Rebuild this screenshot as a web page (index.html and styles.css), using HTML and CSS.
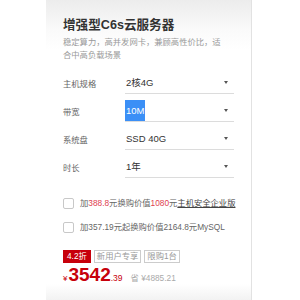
FILE: index.html
```html
<!DOCTYPE html>
<html lang="zh-CN">

<head>
    <meta charset="UTF-8">
    <meta name="viewport" content="width=device-width, initial-scale=1.0">
    <title>增强型C6s云服务器</title>
    <link rel="stylesheet" href="styles.css">
</head>

<body>
    <!-- Product card -->
    <div class="card">
        <h1 class="title">增强型C6s云服务器</h1>
        <p class="desc">稳定算力，高并发网卡，兼顾高性价比，适合中高负载场景</p>

        <div class="form">
            <div class="row">
                <span class="label">主机规格</span>
                <div class="select"><span class="value">2核4G</span><i class="arrow"></i></div>
            </div>
            <div class="row">
                <span class="label">带宽</span>
                <div class="select"><span class="value selected">10M</span><i class="arrow"></i></div>
            </div>
            <div class="row">
                <span class="label">系统盘</span>
                <div class="select"><span class="value">SSD 40G</span><i class="arrow"></i></div>
            </div>
            <div class="row">
                <span class="label">时长</span>
                <div class="select"><span class="value">1年</span><i class="arrow"></i></div>
            </div>
        </div>

        <div class="options">
            <label class="opt">
                <span class="box"></span>
                <span>加<em>388.8</em>元换购价值<em>1080</em>元<u>主机安全企业版</u></span>
            </label>
            <label class="opt">
                <span class="box"></span>
                <span>加357.19元起换购价值2164.8元MySQL</span>
            </label>
        </div>

        <div class="tags">
            <span class="tag tag-red">4.2折</span>
            <span class="tag">新用户专享</span>
            <span class="tag">限购1台</span>
        </div>

        <div class="price">
            <span class="yen">¥</span><span class="int">3542</span><span class="dec">.39</span>
            <span class="old">省 ¥4885.21</span>
        </div>
    </div>
</body>

</html>
```

FILE: styles.css
```css
body {
    margin: 0px;
    padding: 0px;
    font-family: "Liberation Sans", "Noto Sans CJK SC", sans-serif;
    background: #fff;
    height: 300px;
    overflow: hidden;
}

.card {
    margin-left: 46px;
    width: 206px;
    height: 300px;
    padding: 17px 0 0 17px;
    box-sizing: border-box;
    border-right: 1px solid #e2e2e2;
    background: linear-gradient(to bottom, #ececec 0px, #fafafa 30px, #fff 50px, #fff 284px, #f2f2f2 300px);
}

.title {
    margin: 0;
    font-size: 12.6px;
    line-height: 16px;
    font-weight: bold;
    color: #333;
}

.desc {
    margin: 3px 0 0 0;
    width: 162px;
    font-size: 8.3px;
    line-height: 13px;
    color: #999;
}

.form {
    margin-top: 10px;
    display: flex;
    flex-direction: column;
    gap: 6px;
}

.row {
    display: flex;
    align-items: center;
}

.label {
    width: 62px;
    font-size: 8.3px;
    color: #666;
}

.select {
    width: 109px;
    height: 22px;
    box-sizing: border-box;
    border-bottom: 1px solid #dcdcdc;
    display: flex;
    align-items: center;
    justify-content: space-between;
}

.value {
    font-size: 9.5px;
    color: #333;
    padding-left: 1px;
    line-height: 21px;
}

.value.selected {
    background: #3b8ff6;
    color: #fff;
    padding-right: 1px;
}

.arrow {
    width: 0;
    height: 0;
    margin-right: 6px;
    border-left: 2.5px solid transparent;
    border-right: 2.5px solid transparent;
    border-top: 3px solid #555;
}

.options {
    margin-top: 19px;
    display: flex;
    flex-direction: column;
    gap: 12px;
}

.opt {
    display: flex;
    align-items: center;
    gap: 6px;
    font-size: 8.3px;
    color: #666;
    line-height: 12px;
}

.box {
    width: 11px;
    height: 11px;
    box-sizing: border-box;
    border: 1px solid #c8c8c8;
    border-radius: 2px;
    background: #fff;
}

.opt em {
    font-style: normal;
    color: #e0404f;
}

.opt u {
    color: #444;
}

.tags {
    margin-top: 17px;
    display: flex;
    gap: 3px;
}

.tag {
    font-size: 8.3px;
    line-height: 11px;
    padding: 0 2px;
    color: #999;
    border: 1px solid #ccc;
}

.tag-red {
    background: #c7000b;
    border-color: #c7000b;
    color: #fff;
    padding: 0 3px;
}

.price {
    margin-top: 2px;
    display: flex;
    align-items: baseline;
    color: #c7000b;
    line-height: 20px;
}

.yen {
    font-size: 8px;
}

.int {
    font-size: 19px;
    font-weight: bold;
    padding-left: 1px;
}

.dec {
    font-size: 8.5px;
}

.old {
    margin-left: 8px;
    font-size: 8.3px;
    color: #aaa;
}
```
